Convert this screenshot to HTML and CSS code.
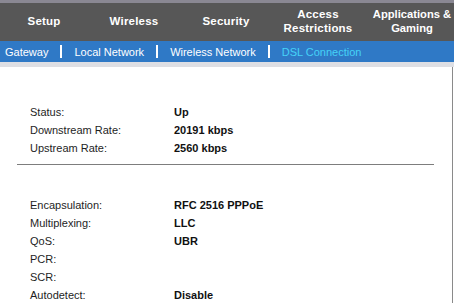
FILE: index.html
```html
<!DOCTYPE html>
<html lang="en">

<head>
    <meta charset="UTF-8">
    <meta name="viewport" content="width=device-width, initial-scale=1.0">
    <title>DSL Connection</title>
    <link rel="stylesheet" href="styles.css">
</head>

<body>
    <header class="header">
        <nav class="tabs">
            <a href="#">Setup</a>
            <a href="#">Wireless</a>
            <a href="#">Security</a>
            <a href="#">Access<br>Restrictions</a>
            <a href="#" class="last">Applications &amp;<br>Gaming</a>
        </nav>
        <nav class="subtabs">
            <a href="#">Gateway</a>
            <span class="sep"></span>
            <a href="#">Local Network</a>
            <span class="sep"></span>
            <a href="#">Wireless Network</a>
            <span class="sep"></span>
            <a href="#" class="active">DSL Connection</a>
        </nav>
        <div class="strip"></div>
    </header>
    <main class="content">
        <section class="info">
            <div class="row"><span>Status:</span><b>Up</b></div>
            <div class="row"><span>Downstream Rate:</span><b>20191 kbps</b></div>
            <div class="row"><span>Upstream Rate:</span><b>2560 kbps</b></div>
        </section>
        <hr class="rule">
        <section class="info info-second">
            <div class="row"><span>Encapsulation:</span><b>RFC 2516 PPPoE</b></div>
            <div class="row"><span>Multiplexing:</span><b>LLC</b></div>
            <div class="row"><span>QoS:</span><b>UBR</b></div>
            <div class="row"><span>PCR:</span><b></b></div>
            <div class="row"><span>SCR:</span><b></b></div>
            <div class="row"><span>Autodetect:</span><b>Disable</b></div>
        </section>
    </main>
</body>

</html>
```

FILE: styles.css
```css
html {
    box-sizing: border-box;
    font-family: "Liberation Sans", Arial, sans-serif;
    font-size: 11px;
}

*,
*:before,
*:after {
    box-sizing: inherit;
}

body {
    margin: 0;
    width: 454px;
    height: 303px;
    overflow: hidden;
    background-color: #fff;
    color: #1e1e1e;
}

a {
    text-decoration: none;
}

.header {
    width: 454px;
}

.tabs {
    display: grid;
    grid-template-columns: 88px 92px 92px 92px 90px;
    height: 41px;
    border-top: 3px solid #8a8893;
    background-color: #575757;
}

.tabs a {
    display: flex;
    align-items: center;
    justify-content: center;
    text-align: center;
    color: #fff;
    font-weight: bold;
    font-size: 11.5px;
    line-height: 14px;
    letter-spacing: .2px;
    padding-bottom: 2px;
}

.tabs a.last {
    padding-left: 6px;
    letter-spacing: 0;
    font-size: 11.2px;
}

.subtabs {
    display: flex;
    align-items: center;
    height: 21px;
    padding-left: 5px;
    background-color: #2f79c6;
}

.subtabs a {
    color: #fff;
    font-size: 11px;
}

.subtabs a.active {
    color: #45d2f7;
}

.sep {
    width: 2px;
    height: 13px;
    margin: 0 12px;
    background-color: #fff;
}

.strip {
    height: 5px;
    background-color: #dedfe4;
}

.content {
    width: 453px;
    height: 240px;
    border-right: 1px solid #8a8a8a;
    padding-top: 36px;
}

.info {
    padding-left: 30px;
}

.info-second {
    padding-top: 31px;
}

.row {
    display: grid;
    grid-template-columns: 144px auto;
    height: 18px;
    align-items: center;
}

.row b {
    color: #111;
}

.rule {
    margin: 7px 0 0 17px;
    width: 417px;
    height: 1px;
    border: 0;
    background-color: #7d7d7d;
}
```
